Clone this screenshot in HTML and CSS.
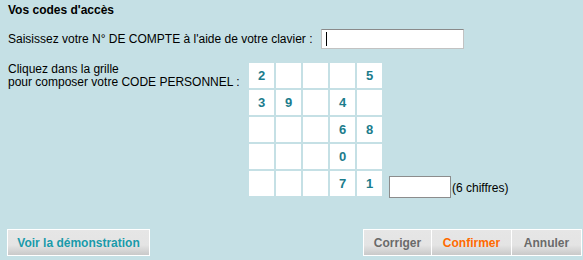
FILE: index.html
```html
<!DOCTYPE html>
<html lang="fr">
<head>
    <meta charset="UTF-8">
    <title>Vos codes d'accès</title>
    <link rel="stylesheet" href="styles.css">
</head>
<body>
    <div class="access">
        <!-- Title -->
        <h1 class="title">Vos codes d'accès</h1>

        <!-- Account number -->
        <div class="account-row">
            <label class="account-label" for="account">Saisissez votre N° DE COMPTE à l'aide de votre clavier :</label>
            <span class="account-field">
                <input class="account-input" id="account" type="text">
                <span class="caret"></span>
            </span>
        </div>

        <!-- Code grid -->
        <div class="code-row">
            <div class="code-label">Cliquez dans la grille<br>pour composer votre CODE PERSONNEL :</div>
            <div class="keypad">
                <div class="key">2</div><div class="key"></div><div class="key"></div><div class="key"></div><div class="key">5</div>
                <div class="key">3</div><div class="key">9</div><div class="key"></div><div class="key">4</div><div class="key"></div>
                <div class="key"></div><div class="key"></div><div class="key"></div><div class="key">6</div><div class="key">8</div>
                <div class="key"></div><div class="key"></div><div class="key"></div><div class="key">0</div><div class="key"></div>
                <div class="key"></div><div class="key"></div><div class="key"></div><div class="key">7</div><div class="key">1</div>
            </div>
            <div class="code-entry">
                <input class="code-input" type="password">
                <span class="code-hint">(6 chiffres)</span>
            </div>
        </div>

        <!-- Buttons -->
        <div class="actions">
            <button class="btn btn-demo">Voir la démonstration</button>
            <div class="btn-group">
                <button class="btn btn-reset">Corriger</button>
                <button class="btn btn-confirm">Confirmer</button>
                <button class="btn btn-cancel">Annuler</button>
            </div>
        </div>
    </div>
</body>
</html>
```
FILE: styles.css
```css
body {
    margin: 0;
    padding: 0;
    background-color: #c5e0e5;
    font-family: "Liberation Sans", Arial, sans-serif;
    font-size: 12px;
    color: #000;
}
.access {
    width: 583px;
    height: 260px;
    padding: 0 1px 0 8px;
    box-sizing: border-box;
}
.title {
    margin: 0;
    padding-top: 3px;
    font-size: 12px;
    line-height: 14px;
    font-weight: bold;
}
.account-row {
    display: flex;
    align-items: center;
    margin-top: 12px;
    height: 20px;
}
.account-label {
    flex: 0 0 305px;
    min-width: 0;
    white-space: nowrap;
}
.account-field {
    position: relative;
    display: flex;
    margin-left: 8px;
}
.account-input {
    width: 143px;
    height: 20px;
    margin: 0;
    padding: 0 4px;
    box-sizing: border-box;
    border: 1px solid #c2c2c2;
    border-top-color: #8a8a8a;
    background: #fff;
    font-family: "Liberation Sans", Arial, sans-serif;
    font-size: 12px;
    outline: none;
}
.caret {
    position: absolute;
    left: 5px;
    top: 3px;
    width: 1px;
    height: 14px;
    background-color: #000;
}
.code-row {
    display: flex;
    margin-top: 14px;
}
.code-label {
    flex: 0 0 233px;
    min-width: 0;
    line-height: 13px;
    white-space: nowrap;
}
.keypad {
    display: grid;
    grid-template-columns: repeat(5, 25px);
    grid-auto-rows: 25px;
    gap: 2px;
    margin-left: 8px;
}
.key {
    background-color: #fff;
    color: #1b7c8c;
    font-weight: bold;
    font-size: 13px;
    display: flex;
    justify-content: center;
    align-items: center;
    cursor: pointer;
}
.code-entry {
    display: flex;
    align-items: center;
    align-self: flex-end;
    margin-left: 7px;
    margin-bottom: -2px;
}
.code-input {
    width: 62px;
    height: 22px;
    box-sizing: border-box;
    border: 1px solid #8c8c8c;
    background: #fff;
    margin: 0;
    outline: none;
}
.code-hint {
    margin-left: 1px;
    padding-top: 1px;
}
.actions {
    display: flex;
    justify-content: space-between;
    margin-top: 33px;
    margin-left: -1px;
}
.btn-group {
    display: flex;
}
.btn {
    height: 27px;
    padding: 0;
    border: 1px solid #fff;
    background: linear-gradient(to bottom, #e6e6e6 0%, #e4e4e4 60%, #c9c9c9 100%);
    font-family: "Liberation Sans", Arial, sans-serif;
    font-size: 12px;
    font-weight: bold;
    cursor: pointer;
}
.btn-demo {
    width: 143px;
    color: #1a9aaa;
}
.btn-reset {
    width: 69px;
    color: #6a6a6a;
}
.btn-confirm {
    width: 81px;
    margin-left: -1px;
    color: #ff6a00;
}
.btn-cancel {
    width: 71px;
    margin-left: -1px;
    color: #6a6a6a;
}
```
